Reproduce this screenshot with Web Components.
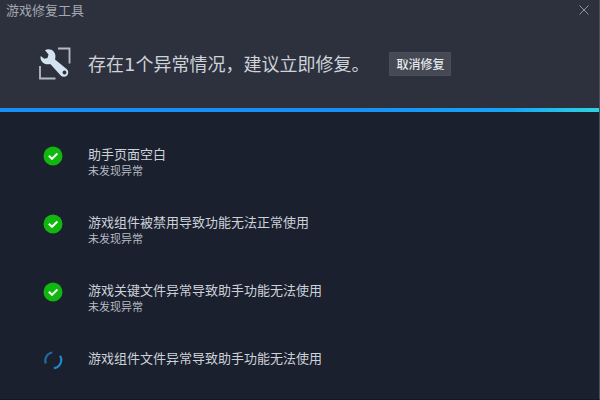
<!DOCTYPE html>
<html lang="zh-CN">
<head>
<meta charset="utf-8">
<meta name="viewport" content="width=device-width, initial-scale=1">
<title>游戏修复工具</title>
<style>
  html, body {
    height: 100%;
  }

  body {
    margin: 0;
    background: #1a202e;
    font-family: "Noto Sans CJK SC", sans-serif;
  }
</style>
</head>
<body>
<repair-window>
  <title-bar slot="header">游戏修复工具</title-bar>
  <repair-status slot="header" action="取消修复">存在<span style="font-family: 'DejaVu Sans', sans-serif">1</span>个异常情况，建议立即修复。</repair-status>
  <check-item state="ok" detail="未发现异常">助手页面空白</check-item>
  <check-item state="ok" detail="未发现异常">游戏组件被禁用导致功能无法正常使用</check-item>
  <check-item state="ok" detail="未发现异常">游戏关键文件异常导致助手功能无法使用</check-item>
  <check-item state="busy">游戏组件文件异常导致助手功能无法使用</check-item>
</repair-window>

<script>
class RepairWindow extends HTMLElement {
  connectedCallback() {
    const shadow = this.attachShadow({ mode: "open" });
    shadow.innerHTML = `
    <style>
      :host {
        display: flex;
        flex-direction: column;
        box-sizing: border-box;
        min-height: 100%;
        border-right: 1px solid #4a505b;
        border-bottom: 1px solid #141825;
        background: #1a202e;
      }

      header {
        height: 108px;
        background: #2c313d;
      }

      .bar {
        height: 4px;
        background: linear-gradient(to right, #1890f5 60%, #16a5f5 85%, #2ed3e0);
      }

      main {
        display: flex;
        flex-direction: column;
        gap: 36px;
        padding: 34px 43px 0;
      }
    </style>
    <header><slot name="header"></slot></header>
    <div class="bar"></div>
    <main role="list"><slot></slot></main>
  `;
  }
}

class TitleBar extends HTMLElement {
  connectedCallback() {
    const shadow = this.attachShadow({ mode: "open" });
    shadow.innerHTML = `
    <style>
      :host {
        display: flex;
        align-items: center;
        justify-content: space-between;
        height: 20px;
        padding: 0 8px 0 6px;
        color: #a4a8b1;
        font-size: 13px;
        line-height: 20px;
      }

      button {
        display: flex;
        padding: 1px;
        border: 0;
        background: none;
        color: #90949d;
      }
    </style>
    <span><slot></slot></span>
    <button aria-label="关闭">
      <svg width="12" height="12" viewBox="0 0 12 12" fill="none" stroke="currentColor">
        <path d="M1.5 1.5l9 9M10.5 1.5l-9 9"/>
      </svg>
    </button>
  `;
  }
}

class RepairStatus extends HTMLElement {
  connectedCallback() {
    const shadow = this.attachShadow({ mode: "open" });
    shadow.innerHTML = `
    <style>
      :host {
        display: flex;
        align-items: center;
        height: 88px;
        padding-left: 38px;
      }

      svg {
        flex: none;
        margin-right: 17px;
      }

      h1 {
        margin: 0 20px 0 0;
        color: #ced2d9;
        font-size: 18px;
        font-weight: 400;
        line-height: 24px;
        white-space: nowrap;
      }

      button {
        height: 24px;
        padding: 0 6px;
        border: 1px solid #484d58;
        background: #444953;
        color: #e6e8ec;
        font-family: inherit;
        font-size: 12px;
        font-weight: 500;
        line-height: 20px;
        white-space: nowrap;
      }
    </style>
    <svg width="33" height="34" viewBox="0 0 33 34">
      <path d="M20 1.500h11.500v15M2 19v12.500h15.500" fill="none" stroke="#b3bcc6" stroke-width="1.800"/>
      <path fill="#d3e3f0" fill-rule="evenodd" d="M7 3.300C9.500 1.800 13.500 2 15.800 4.700c1.900 2.300 2 5.100 1.200 7.800L28.600 22a4.400 4.400 0 1 1-5.900 6.500L12.300 17c-3 .8-6.200.2-8.200-2.200C2.700 13.100 2.200 11 2.700 9l3.500 2.800 3.300-.7 1-3.700zM26.500 23.600a1.900 1.900 0 1 0 .01 0z"/>
    </svg>
    <h1><slot></slot></h1>
    <button></button>
  `;
    shadow.querySelector("button").textContent = this.getAttribute("action");
  }
}

const stateIcons = {
  ok: `
    <svg width="20" height="20" viewBox="0 0 20 20" role="img" aria-label="正常">
      <circle cx="10" cy="10" r="9.500" fill="#11b70e"/>
      <path d="M5.800 9.800l3.200 3 5.400-5.300" fill="none" stroke="#f2fff2" stroke-width="2"/>
    </svg>`,
  busy: `
    <svg width="20" height="20" viewBox="0 0 20 20" role="img" aria-label="检测中" fill="none" stroke-width="2.200">
      <path d="M2.800 13.500A8.200 8.200 0 0 1 9.300 2.500" stroke="#216b9f"/>
      <path d="M17 5.800A8.200 8.200 0 0 1 10.800 18.200" stroke="#2485ca"/>
    </svg>`
};

class CheckItem extends HTMLElement {
  connectedCallback() {
    this.setAttribute("role", "listitem");
    const shadow = this.attachShadow({ mode: "open" });
    shadow.innerHTML = `
    <style>
      :host {
        display: flex;
        align-items: flex-start;
        gap: 25px;
      }

      svg {
        flex: none;
      }

      p {
        margin: 0;
        color: #cdd1d8;
        font-size: 13px;
        line-height: 16px;
      }

      .detail {
        color: #b8bcc4;
        font-size: 11px;
      }
    </style>
    ${stateIcons[this.getAttribute("state")]}
    <div>
      <p><slot></slot></p>
    </div>
  `;

    if (this.hasAttribute("detail")) {
      const detail = document.createElement("p");
      detail.className = "detail";
      detail.textContent = this.getAttribute("detail");
      shadow.querySelector("div").append(detail);
    }
  }
}

customElements.define("repair-window", RepairWindow);
customElements.define("title-bar", TitleBar);
customElements.define("repair-status", RepairStatus);
customElements.define("check-item", CheckItem);
</script>
</body>
</html>
